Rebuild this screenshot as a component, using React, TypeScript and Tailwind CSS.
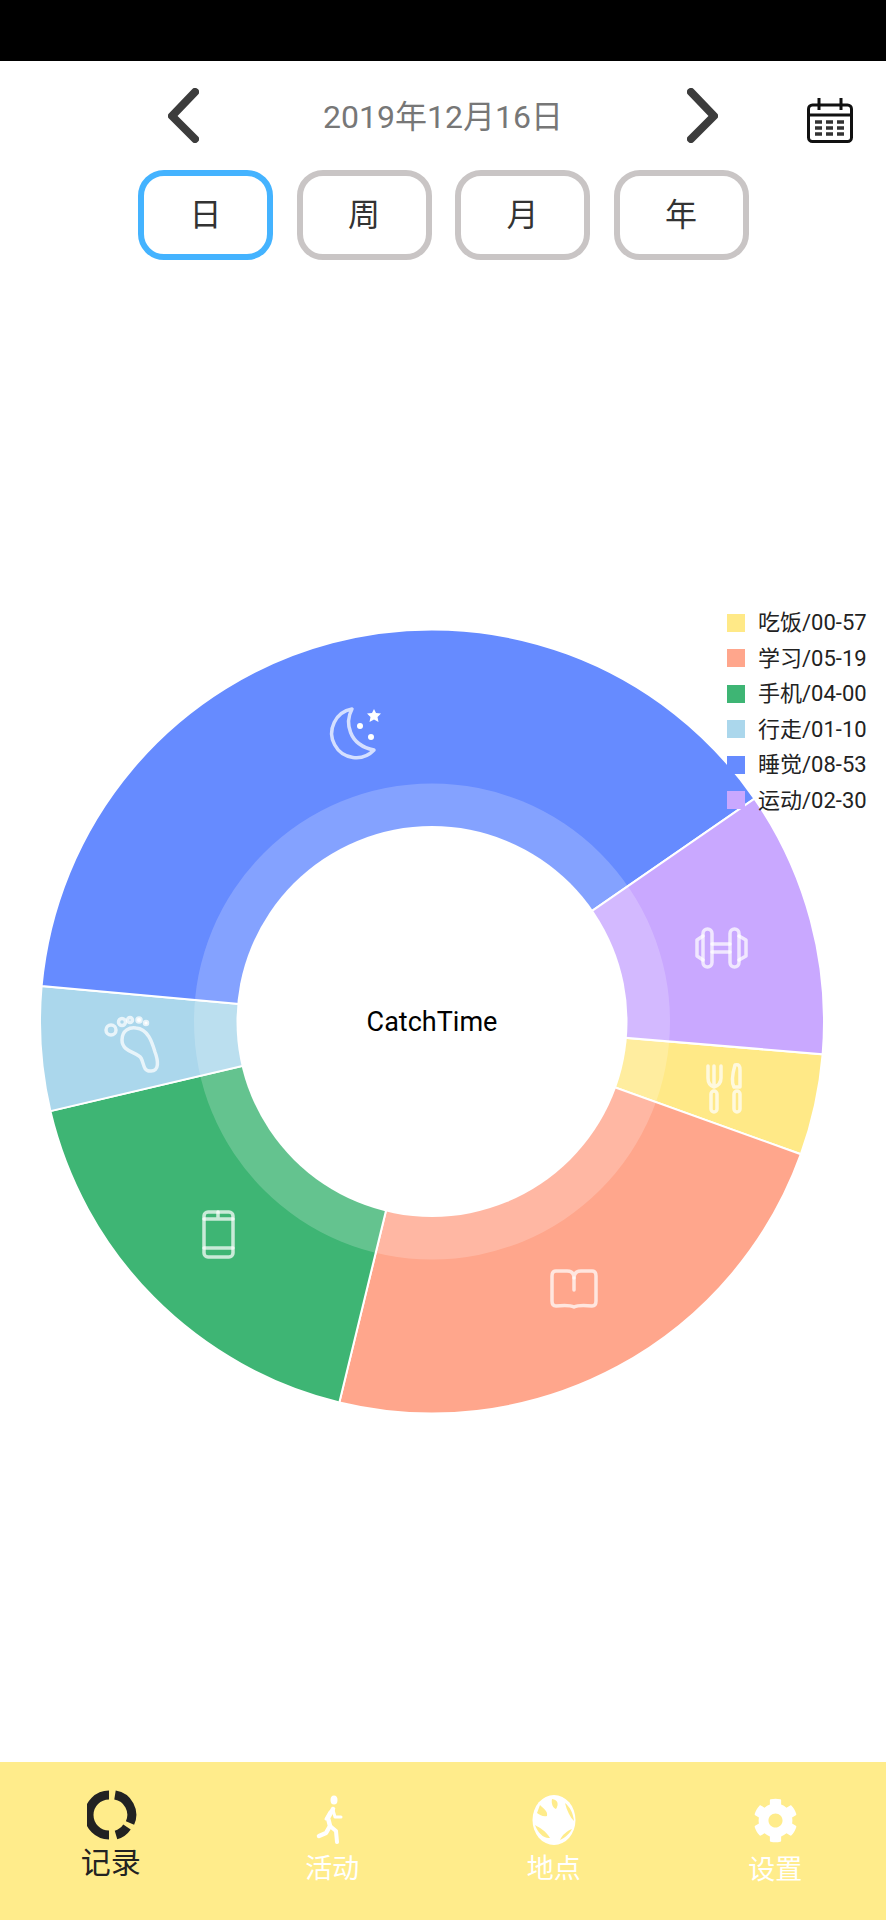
import React from 'react';
import { FaCog } from 'react-icons/fa';

const CX = 432;
const CY = 399.5;
const R_OUT = 392;
const R_RING = 238;
const R_IN = 195.5;
const START = 4.8;

const SLICES = [
  { name: '吃饭', time: '00-57', mins: 57, color: '#ffe987' },
  { name: '学习', time: '05-19', mins: 319, color: '#ffa68c' },
  { name: '手机', time: '04-00', mins: 240, color: '#3eb574' },
  { name: '行走', time: '01-10', mins: 70, color: '#abd7ec' },
  { name: '睡觉', time: '08-53', mins: 533, color: '#668bff' },
  { name: '运动', time: '02-30', mins: 150, color: '#c9a8ff' },
];

const TABS = ['日', '周', '月', '年'];

const pt = (deg: number, r: number) => {
  const a = (deg * Math.PI) / 180;
  return `${(CX + r * Math.cos(a)).toFixed(2)} ${(CY + r * Math.sin(a)).toFixed(2)}`;
};

// filled pie wedge
const wedge = (from: number, to: number, r: number) => {
  const large = to - from > 180 ? 1 : 0;
  return `M${CX} ${CY} L${pt(from, r)} A${r} ${r} 0 ${large} 1 ${pt(to, r)} Z`;
};

const total = SLICES.reduce((sum, s) => sum + s.mins, 0);

const DonutChart: React.FC = () => {
  let angle = START;
  const wedges = SLICES.map((s) => {
    const from = angle;
    angle += (s.mins / total) * 360;
    return { ...s, from, to: angle };
  });

  return (
    <svg width="886" height="800" viewBox="0 0 886 800" className="block">
      {wedges.map((w) => (
        <path key={w.name} d={wedge(w.from, w.to, R_OUT)} fill={w.color} stroke="#fff" strokeWidth="2" />
      ))}
      <circle cx={CX} cy={CY} r={R_RING} fill="#fff" fillOpacity="0.2" />
      <circle cx={CX} cy={CY} r={R_IN} fill="#fff" />

      {/* slice icons, coordinates relative to page y - 622 */}
      <g transform="translate(0 -622)" className="blur-[0.5px]" fill="none" stroke="#fff" strokeOpacity="0.72" strokeWidth="3.5" strokeLinecap="round" strokeLinejoin="round">
        {/* moon */}
        <path d="M352 709 A24.500 24.500 0 1 0 374 750 C348 745 345 722 352 709Z" />
        <path d="M374 709 l2 4 l5 .6 l-3.500 3.500 l1 5 l-4.500 -2.500 l-4.500 2.500 l1 -5 l-3.500 -3.500 l5 -.6Z" fill="#fff" stroke="none" />
        <circle cx="360" cy="726" r="3" fill="#fff" stroke="none" />
        <circle cx="371" cy="737" r="3" fill="#fff" stroke="none" />

        {/* foot */}
        <path d="M122 1040 C122 1030 130 1027 136 1028 C148 1029 152 1042 155 1052 C158 1060 160 1072 150 1071 C143 1071 144 1063 141 1058 C137 1052 122 1052 122 1040Z" />
        <circle cx="111" cy="1030" r="5" />
        <circle cx="122" cy="1022" r="3.500" />
        <circle cx="130" cy="1020" r="2.500" />
        <circle cx="139" cy="1020" r="2" fill="#fff" />
        <circle cx="146" cy="1023" r="1.500" fill="#fff" />

        {/* dumbbell */}
        <rect x="703" y="929" width="9" height="38" rx="4.500" />
        <rect x="730" y="929" width="9" height="38" rx="4.500" />
        <path d="M703 936 L697 940 V956 L703 960 M739 936 L746 940 V956 L739 960" />
        <path d="M712 944 H730 M712 952 H730" />

        {/* fork and knife */}
        <path d="M708 1066 V1078 C708 1084 711 1086 714 1087 C717 1086 721 1084 721 1078 V1066 M714 1066 V1087" />
        <rect x="711" y="1091" width="6" height="21" rx="3" />
        <path d="M735 1065 C739 1064 740 1066 740 1070 V1087 H734 C731 1082 733 1072 735 1065Z" />
        <rect x="734" y="1091" width="6" height="21" rx="3" />

        {/* phone */}
        <rect x="204" y="1212" width="29" height="45" rx="4" />
        <path d="M204 1219 H233 M204 1248 H233 M218 1212 V1219" />

        {/* book */}
        <path d="M574 1307 C570 1305 566 1305 556 1306 C553 1306 552 1304 552 1301 V1276 C552 1273 553 1271 556 1271 H567 C571 1271 574 1273 574 1278 C574 1273 577 1271 581 1271 H592 C595 1271 596 1273 596 1276 V1301 C596 1304 595 1306 592 1306 C582 1305 578 1305 574 1307Z" />
        <path d="M574 1278 V1290" />
      </g>
    </svg>
  );
};

const RecordIcon = () => (
  <svg width="50" height="50" viewBox="0 0 50 50" fill="none" stroke="#222" strokeWidth="9" className="blur-[0.5px] translate-x-[1px]">
    <path d="M22 5 A20 20 0 0 0 22 45" />
    <path d="M28 5 A20 20 0 0 1 43 33" />
    <path d="M40 37 A20 20 0 0 1 29 45" />
  </svg>
);

const RunIcon = () => (
  <svg width="34" height="50" viewBox="0 0 34 50" fill="none" stroke="#fff" strokeWidth="4" strokeLinecap="round" strokeLinejoin="round" className="blur-[0.5px]">
    <ellipse cx="19" cy="5" rx="3.500" ry="4.500" fill="#fff" stroke="none" />
    <path d="M18 14 L13 23 L15 31 L11 38 L4 41" strokeWidth="4.500" />
    <path d="M18 15 L20 22 L26 22" strokeWidth="3" />
    <path d="M15 31 L21 36 L22 47" />
    <path d="M15 17 L11 24" strokeWidth="3" />
  </svg>
);

// white disc with the land cut out in the bar colour
const GlobeIcon = () => (
  <svg width="44" height="50" viewBox="0 0 44 50" className="blur-[0.5px]">
    <ellipse cx="22" cy="25" rx="21.500" ry="25" fill="#fff" />
    <path d="M8 10 C12 14 16 16 15 21 C11 22 8 20 5 18 Z" fill="#ffec8b" />
    <path d="M20 4 C26 5 27 9 24 14 C21 13 19 9 20 4Z" fill="#ffec8b" />
    <path d="M33 8 C38 12 41 18 42 26 C38 22 35 16 33 8Z" fill="#ffec8b" />
    <path d="M3 30 C8 33 14 36 18 43 C12 44 6 38 3 30Z" fill="#ffec8b" />
    <path d="M40 34 C38 38 33 43 28 45 C30 40 35 36 40 34Z" fill="#ffec8b" />
  </svg>
);

const Chevron = ({ dir }: { dir: 'left' | 'right' }) => (
  <svg width="33" height="55" viewBox="0 0 33 55" fill="none" stroke="#3c3c3c" strokeWidth="8" strokeLinecap="round" strokeLinejoin="round" className="blur-[0.5px]">
    <path d={dir === 'left' ? 'M28 4 L5 28 L28 51' : 'M5 4 L28 28 L5 51'} />
  </svg>
);

const CalendarIcon = () => (
  <svg width="46" height="46" viewBox="0 0 46 46" fill="none" stroke="#111" strokeWidth="3">
    <rect x="1.500" y="8" width="43" height="36.500" rx="4" />
    <path d="M2 18 H44 M12 1 V13 M34 1 V13" />
    <path d="M8 25 H38 M8 31 H38 M8 37 H38" stroke="#333" strokeWidth="3.500" strokeDasharray="7 4" />
  </svg>
);

export default function App() {
  return (
    <div className="flex flex-col w-[886px] h-[1920px] bg-white overflow-hidden font-['Roboto','Noto_Sans_CJK_SC',sans-serif]">
      <div className="h-[61px] bg-black shrink-0" />

      {/* date row */}
      <div className="flex items-center h-[109px] shrink-0 pl-[167px] pr-[33px]">
        <Chevron dir="left" />
        <div className="w-[486px] pt-[3px] text-center text-[32px] text-[#777]">2019年12月16日</div>
        <Chevron dir="right" />
        <div className="ml-auto mt-[8px]">
          <CalendarIcon />
        </div>
      </div>

      {/* period tabs */}
      <div className="flex gap-[23.500px] pl-[138px] shrink-0">
        {TABS.map((t, i) => (
          <div
            key={t}
            className={`flex items-center justify-center w-[135px] h-[90px] rounded-[26px] border-[6px] bg-white text-[32px] text-[#333] ${
              i === 0 ? 'border-[#44b3ff]' : 'border-[#c9c5c5]'
            }`}
          >
            {t}
          </div>
        ))}
      </div>

      {/* chart */}
      <div className="relative flex-1 pt-[362px]">
        <DonutChart />
        <div className="absolute left-0 w-[864px] top-[748px] text-center text-[27px] leading-[28px] text-black">CatchTime</div>
        <div className="absolute left-[727px] top-[345px] flex flex-col">
          {SLICES.map((s) => (
            <div key={s.name} className="flex items-center h-[35.500px] gap-[13px] text-[22px] text-[#222]">
              <div className="w-[18px] h-[18px]" style={{ backgroundColor: s.color }} />
              <span>
                {s.name}/{s.time}
              </span>
            </div>
          ))}
        </div>
      </div>

      {/* bottom nav */}
      <div className="grid grid-cols-4 h-[158px] shrink-0 bg-[#ffec8b] text-white">
        <div className="flex flex-col items-center pt-[28px]">
          <RecordIcon />
          <span className="text-[30px] leading-[38px] text-[#222] mt-[4px]">记录</span>
        </div>
        <div className="flex flex-col items-center pt-[33px]">
          <RunIcon />
          <span className="text-[27px] leading-[36px] mt-[6px]">活动</span>
        </div>
        <div className="flex flex-col items-center pt-[33px]">
          <GlobeIcon />
          <span className="text-[27px] leading-[36px] mt-[6px]">地点</span>
        </div>
        <div className="flex flex-col items-center pt-[36px]">
          <FaCog size={45} />
          <span className="text-[27px] leading-[36px] mt-[9px]">设置</span>
        </div>
      </div>
    </div>
  );
}
